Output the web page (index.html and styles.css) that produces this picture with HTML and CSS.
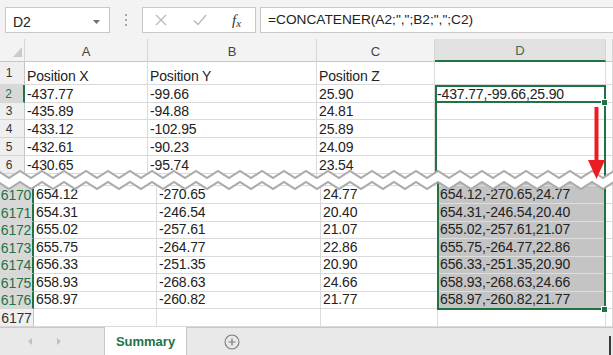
FILE: index.html
```html
<!DOCTYPE html>
<html lang="fr">
<head>
    <meta charset="UTF-8">
    <meta name="viewport" content="width=device-width, initial-scale=1.0">
    <title>CONCATENER</title>
    <link rel="stylesheet" href="styles.css">
</head>
<body>
<div class="app">
    <div class="toolbar">
        <div class="namebox">
            <span>D2</span>
            <svg width="7" height="4" viewBox="0 0 7 4"><path d="M0 0h7L3.5 4z" fill="#707070"/></svg>
        </div>
        <div class="grip"><i></i><i></i><i></i></div>
        <div class="fbtns">
            <svg class="cancel" width="12" height="12" viewBox="0 0 12 12"><path d="M1 1l10 10M11 1L1 11" stroke="#b8b8b8" stroke-width="1.2"/></svg>
            <svg class="enter" width="14" height="12" viewBox="0 0 14 12"><path d="M1 6.5l4 4L13 1" fill="none" stroke="#b8b8b8" stroke-width="1.2"/></svg>
            <span class="fx">f<span>x</span></span>
        </div>
        <div class="formula">=CONCATENER(A2;",";B2;",";C2)</div>
    </div>

    <div class="part top">
        <div class="c hd corner"><svg width="9" height="10" viewBox="0 0 9 10"><path d="M9 0v10H0z" fill="#cacaca"/></svg></div>
        <div class="c hd">A</div>
        <div class="c hd">B</div>
        <div class="c hd">C</div>
        <div class="c hd on">D</div>
        <div class="c hd"></div>

        <div class="c rh">1</div>
        <div class="c">Position X</div>
        <div class="c">Position Y</div>
        <div class="c">Position Z</div>
        <div class="c"></div>
        <div class="c"></div>

        <div class="c rh on">2</div>
        <div class="c">-437.77</div>
        <div class="c">-99.66</div>
        <div class="c">25.90</div>
        <div class="c">-437.77,-99.66,25.90</div>
        <div class="c"></div>

        <div class="c rh">3</div>
        <div class="c">-435.89</div>
        <div class="c">-94.88</div>
        <div class="c">24.81</div>
        <div class="c"></div>
        <div class="c"></div>

        <div class="c rh">4</div>
        <div class="c">-433.12</div>
        <div class="c">-102.95</div>
        <div class="c">25.89</div>
        <div class="c"></div>
        <div class="c"></div>

        <div class="c rh">5</div>
        <div class="c">-432.61</div>
        <div class="c">-90.23</div>
        <div class="c">24.09</div>
        <div class="c"></div>
        <div class="c"></div>

        <div class="c rh">6</div>
        <div class="c">-430.65</div>
        <div class="c">-95.74</div>
        <div class="c">23.54</div>
        <div class="c"></div>
        <div class="c"></div>

        <div class="c rh"></div>
        <div class="c"></div>
        <div class="c"></div>
        <div class="c"></div>
        <div class="c"></div>
        <div class="c"></div>

        <div class="range"></div>
        <div class="active"></div>
        <div class="handle h-top"></div>
    </div>

    <div class="part bottom">
        <div class="c rh on"></div>
        <div class="c"></div>
        <div class="c"></div>
        <div class="c"></div>
        <div class="c gs"></div>
        <div class="c"></div>

        <div class="c rh on">6170</div>
        <div class="c">654.12</div>
        <div class="c">-270.65</div>
        <div class="c">24.77</div>
        <div class="c gs">654.12,-270.65,24.77</div>
        <div class="c"></div>

        <div class="c rh on">6171</div>
        <div class="c">654.31</div>
        <div class="c">-246.54</div>
        <div class="c">20.40</div>
        <div class="c gs">654.31,-246.54,20.40</div>
        <div class="c"></div>

        <div class="c rh on">6172</div>
        <div class="c">655.02</div>
        <div class="c">-257.61</div>
        <div class="c">21.07</div>
        <div class="c gs">655.02,-257.61,21.07</div>
        <div class="c"></div>

        <div class="c rh on">6173</div>
        <div class="c">655.75</div>
        <div class="c">-264.77</div>
        <div class="c">22.86</div>
        <div class="c gs">655.75,-264.77,22.86</div>
        <div class="c"></div>

        <div class="c rh on">6174</div>
        <div class="c">656.33</div>
        <div class="c">-251.35</div>
        <div class="c">20.90</div>
        <div class="c gs">656.33,-251.35,20.90</div>
        <div class="c"></div>

        <div class="c rh on">6175</div>
        <div class="c">658.93</div>
        <div class="c">-268.63</div>
        <div class="c">24.66</div>
        <div class="c gs">658.93,-268.63,24.66</div>
        <div class="c"></div>

        <div class="c rh on">6176</div>
        <div class="c">658.97</div>
        <div class="c">-260.82</div>
        <div class="c">21.77</div>
        <div class="c gs">658.97,-260.82,21.77</div>
        <div class="c"></div>

        <div class="c rh">6177</div>
        <div class="c"></div>
        <div class="c"></div>
        <div class="c"></div>
        <div class="c"></div>
        <div class="c"></div>

        <div class="range-bot"></div>
        <div class="handle h-bot"></div>
    </div>

    <div class="tabs">
        <div class="nav">
            <svg width="4" height="7" viewBox="0 0 4 7"><path d="M4 0v7L0 3.5z" fill="#c0c0c0"/></svg>
            <svg width="4" height="7" viewBox="0 0 4 7"><path d="M0 0v7l4-3.5z" fill="#c0c0c0"/></svg>
        </div>
        <div class="tab">Summary</div>
        <div class="add">
            <svg width="16" height="16" viewBox="0 0 16 16"><circle cx="8" cy="8" r="7" fill="none" stroke="#7a7a7a" stroke-width="1.1"/><path d="M8 4.5v7M4.5 8h7" stroke="#7a7a7a" stroke-width="1.2"/></svg>
        </div>
        <div class="edge"></div>
    </div>

    <!-- coupure entre les deux captures -->
    <svg class="tear" width="613" height="34" viewBox="0 0 613 34">
        <defs>
            <pattern id="zig" x="9" y="0" width="22" height="34" patternUnits="userSpaceOnUse">
                <polygon points="0,18 11,11 22,18 22,29 11,22 0,29" fill="#fff"/>
                <polyline points="-11,11 0,18 11,11 22,18 33,11" fill="none" stroke="#ababab" stroke-width="2"/>
                <polyline points="-11,22 0,29 11,22 22,29 33,22" fill="none" stroke="#ababab" stroke-width="2"/>
            </pattern>
        </defs>
        <rect x="0" y="0" width="613" height="34" fill="url(#zig)"/>
    </svg>

    <svg class="arrow" width="22" height="76" viewBox="0 0 22 76">
        <rect x="8.5" y="2" width="4" height="55" fill="#ec1c24"/>
        <polygon points="2,55 19,55 10.5,74" fill="#ec1c24"/>
    </svg>
</div>
</body>
</html>
```

FILE: styles.css
```css
* {
    box-sizing: border-box;
}
body {
    margin: 0;
    font-family: "Liberation Sans", Arial, sans-serif;
    background: #fff;
}
.app {
    position: relative;
    width: 613px;
    height: 355px;
    overflow: hidden;
}

/* barre de formule */
.toolbar {
    height: 39px;
    background: #f3f3f3;
    display: flex;
    align-items: flex-start;
    padding: 7px 0 0 5px;
}
.namebox {
    width: 105px;
    height: 26px;
    background: #fff;
    border: 1px solid #c8c8c8;
    display: flex;
    align-items: center;
    justify-content: space-between;
    padding: 3px 9px 0 7px;
    font-size: 14px;
    color: #222;
}
.grip {
    width: 32px;
    height: 26px;
    display: flex;
    flex-direction: column;
    align-items: center;
    gap: 3px;
    padding-top: 7px;
}
.grip i {
    width: 2px;
    height: 2px;
    background: #a8a8a8;
}
.fbtns {
    width: 114px;
    height: 26px;
    background: #fff;
    border: 1px solid #c8c8c8;
    display: flex;
    align-items: center;
    padding-left: 12px;
}
.fbtns .enter {
    margin-left: 26px;
}
.fx {
    margin-left: 25px;
    font-family: "Liberation Serif", serif;
    font-style: italic;
    font-size: 15px;
    color: #333;
}
.fx span {
    font-size: 11px;
    position: relative;
    top: 2px;
}
.formula {
    flex: 1;
    height: 26px;
    margin-left: 4px;
    background: #fff;
    border: 1px solid #c8c8c8;
    border-right: none;
    padding-left: 7px;
    font-size: 13.7px;
    line-height: 24px;
    color: #222;
}

/* grilles */
.part {
    position: relative;
    overflow: hidden;
    display: grid;
}
.top {
    height: 141px;
    grid-template-columns: 25px 123px 169px 118px 171px 1fr;
    grid-template-rows: 23px 23px 18px 17px 18px 18px 18px 6px;
}
.bottom {
    height: 147px;
    grid-template-columns: 34px 123px 164px 117px 168px 1fr;
    grid-template-rows: 6px 18px 18px 17px 18px 17px 18px 17px 18px;
}
.c {
    border-right: 1px solid #dadada;
    border-bottom: 1px solid #dadada;
    padding-left: 2px;
    font-size: 14px;
    line-height: 16px;
    letter-spacing: -0.15px;
    color: #222;
    display: flex;
    align-items: flex-end;
    white-space: nowrap;
    overflow: hidden;
}
.bottom .c {
    padding-bottom: 1px;
}
.hd {
    background: #f3f3f3;
    border-right-color: #d6d6d6;
    border-bottom-color: #c6c6c6;
    justify-content: center;
    padding: 0 0 1px;
    font-size: 13px;
    letter-spacing: 0;
    color: #444;
}
.hd.on {
    background: #e1e1e1;
    color: #3c6b4e;
    border-bottom: 2px solid #217346;
}
.corner {
    justify-content: flex-end;
    padding: 0 2px 4px 0;
}
.rh {
    background: #efefef;
    border-right-color: #c6c6c6;
    border-bottom-color: #d6d6d6;
    justify-content: center;
    align-items: center;
    padding: 0 6px 0 0;
    font-size: 12px;
    letter-spacing: 0;
    color: #333;
}
.bottom .rh {
    padding: 0;
    font-size: 14px;
    letter-spacing: -0.2px;
}
.rh.on {
    background: #d8d8d8;
    color: #217346;
    border-right: 2px solid #217346;
}
.gs {
    background: #c4c4c4;
    border-bottom-color: #dedede;
}

/* sélection */
.range,
.active,
.range-bot {
    position: absolute;
    border: 2px solid #217346;
}
.range {
    left: 435px;
    top: 46px;
    width: 171px;
    height: 120px;
    border-bottom: none;
}
.active {
    left: 435px;
    top: 46px;
    width: 171px;
    height: 18px;
}
.range-bot {
    left: 437px;
    top: 0;
    width: 169px;
    height: 130px;
    border-top: none;
}
.handle {
    position: absolute;
    width: 7px;
    height: 7px;
    background: #217346;
    border: 1px solid #fff;
}
.h-top {
    left: 601px;
    top: 60px;
}
.h-bot {
    left: 601px;
    top: 126px;
}

/* onglets */
.tabs {
    height: 28px;
    background: #e9e9e9;
    border-top: 1px solid #c8c8c8;
    display: flex;
    align-items: stretch;
}
.nav {
    width: 104px;
    display: flex;
    align-items: center;
    gap: 25px;
    padding-left: 28px;
}
.tab {
    width: 83px;
    margin-top: -1px;
    background: #fff;
    border-left: 1px solid #c8c8c8;
    border-right: 1px solid #c8c8c8;
    display: flex;
    align-items: center;
    justify-content: center;
    font-size: 13px;
    font-weight: bold;
    color: #217346;
}
.add {
    margin-left: 37px;
    display: flex;
    align-items: center;
}
.edge {
    margin: 8px 2px 0 auto;
    width: 2px;
    background: #3a3a3a;
}

/* superpositions */
.tear {
    position: absolute;
    left: 0;
    top: 160px;
}
.arrow {
    position: absolute;
    left: 586px;
    top: 105px;
}
```
